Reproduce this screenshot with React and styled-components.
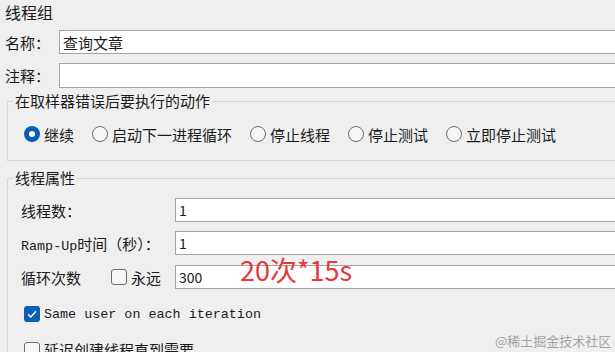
import React from 'react';
import styled, { createGlobalStyle } from 'styled-components';

const GlobalStyle = createGlobalStyle`
    html, body {
        margin: 0;
        padding: 0;
        background: #efefef;
        overflow: hidden;
    }
    body {
        font-family: "Noto Sans CJK SC", "Noto Sans", sans-serif;
        color: #1a1a1a;
    }
`;

const Page = styled.div`
    position: relative;
    width: 640px;
    height: 352px;
    padding: 0 0 0 5px;
    box-sizing: border-box;
    overflow: hidden;
`;

const Title = styled.div`
    height: 26px;
    line-height: 24px;
    font-size: 16px;
`;

const FieldRow = styled.div`
    display: flex;
    align-items: center;
    margin-top: ${props => props.$top || 0}px;
    padding-left: ${props => props.$indent || 0}px;
`;

const Label = styled.div`
    width: ${props => props.$width}px;
    flex-shrink: 0;
    font-size: 15px;
    white-space: nowrap;
`;

const MonoPart = styled.span`
    font-family: "Liberation Mono", monospace;
    font-size: 13.4px;
`;

const TextBox = styled.div`
    flex: 1;
    height: ${props => props.$height || 24}px;
    box-sizing: border-box;
    background: #ffffff;
    border: 1px solid #a3a3a3;
    padding: 0 3px;
    display: flex;
    align-items: center;
    font-size: ${props => props.$small ? 14 : 15}px;
    font-family: "Noto Sans CJK SC", sans-serif;
`;

const Group = styled.fieldset`
    margin: ${props => props.$top}px 0 0 2px;
    padding: 0 0 ${props => props.$bottom || 0}px 5px;
    border: 1px solid #d6d6d6;
    border-right: none;
    min-width: 0;
`;

const Legend = styled.legend`
    padding: 0 2px;
    font-size: 15px;
    line-height: 20px;
`;

const RadioRow = styled.div`
    display: flex;
    align-items: center;
    gap: 18px;
    padding: 13px 0 0 11px;
    height: 20px;
`;

const Choice = styled.label`
    display: flex;
    align-items: center;
    gap: 4px;
    width: ${props => props.$width ? `${props.$width}px` : 'auto'};
    font-size: 15px;
    white-space: nowrap;
`;

const RadioMark = styled.span`
    width: 16px;
    height: 16px;
    box-sizing: border-box;
    border-radius: 50%;
    flex-shrink: 0;
    border: ${props => props.$checked ? '5px solid #0a5fb4' : '1px solid #6b6b6b'};
    background: ${props => props.$checked ? '#ffffff' : '#f6f6f6'};
`;

const CheckMark = styled.span`
    width: 16px;
    height: 16px;
    box-sizing: border-box;
    border-radius: 3px;
    flex-shrink: 0;
    display: flex;
    align-items: center;
    justify-content: center;
    border: ${props => props.$checked ? 'none' : '1px solid #6b6b6b'};
    background: ${props => props.$checked ? '#0a5fb4' : '#f6f6f6'};
`;

const CheckRow = styled.label`
    display: flex;
    align-items: center;
    gap: 4px;
    margin-top: ${props => props.$top}px;
    padding-left: 11px;
    font-size: 15px;
    white-space: nowrap;
`;

const Annotation = styled.div`
    position: absolute;
    left: 240px;
    top: 250px;
    font-size: 27px;
    color: #e8383d;
    font-family: "Noto Sans CJK SC", sans-serif;
`;

const Watermark = styled.div`
    position: absolute;
    left: 495px;
    top: 331px;
    font-size: 13px;
    color: #a3a3a3;
    font-family: "Noto Sans CJK SC", sans-serif;
`;

function Check({ checked }) {
    return (
        <CheckMark $checked={checked}>
            {checked && (
                <svg width="10" height="8" viewBox="0 0 10 8">
                    <path d="M1 4.2 L3.8 7 L9 1.2" fill="none" stroke="#ffffff" strokeWidth="1.4" />
                </svg>
            )}
        </CheckMark>
    );
}

const actions = ['继续', '启动下一进程循环', '停止线程', '停止测试', '立即停止测试'];

function App() {
    return (
        <Page>
            <GlobalStyle />
            <Title>线程组</Title>
            <FieldRow $top={4}>
                <Label $width={54}>名称：</Label>
                <TextBox>查询文章</TextBox>
            </FieldRow>
            <FieldRow $top={9}>
                <Label $width={54}>注释：</Label>
                <TextBox $height={25} />
            </FieldRow>

            <Group $top={3} $bottom={16}>
                <Legend>在取样器错误后要执行的动作</Legend>
                <RadioRow>
                    {actions.map((a, i) => (
                        <Choice key={a}>
                            <RadioMark $checked={i === 0} />
                            {a}
                        </Choice>
                    ))}
                </RadioRow>
            </Group>

            <Group $top={7} $bottom={40}>
                <Legend>线程属性</Legend>
                <FieldRow $top={10} $indent={8}>
                    <Label $width={154}>线程数：</Label>
                    <TextBox $small>1</TextBox>
                </FieldRow>
                <FieldRow $top={9} $indent={8}>
                    <Label $width={154}><MonoPart>Ramp-Up</MonoPart>时间（秒）：</Label>
                    <TextBox $small>1</TextBox>
                </FieldRow>
                <FieldRow $top={10} $indent={8}>
                    <Label $width={90}>循环次数</Label>
                    <Choice $width={64}>
                        <Check checked={false} />
                        永远
                    </Choice>
                    <TextBox $small>300</TextBox>
                </FieldRow>
                <CheckRow $top={17}>
                    <Check checked />
                    <MonoPart>Same user on each iteration</MonoPart>
                </CheckRow>
                <CheckRow $top={17}>
                    <Check checked={false} />
                    延迟创建线程直到需要
                </CheckRow>
            </Group>

            <Annotation>20次*15s</Annotation>
            <Watermark>@稀土掘金技术社区</Watermark>
        </Page>
    );
}

export default App;
